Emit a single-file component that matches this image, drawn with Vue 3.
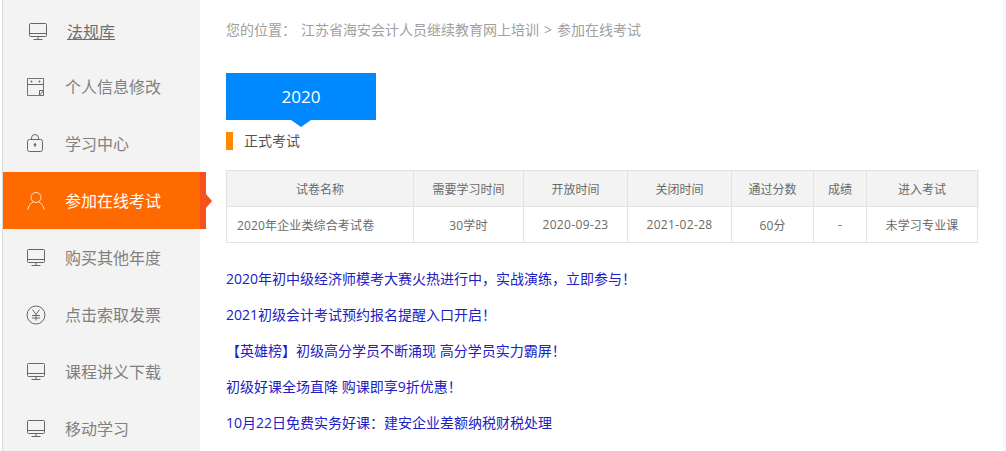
<script setup>
const menu = [
  { label: '法规库', icon: 'monitor', link: true },
  { label: '个人信息修改', icon: 'calendar' },
  { label: '学习中心', icon: 'bag' },
  { label: '参加在线考试', icon: 'user', active: true },
  { label: '购买其他年度', icon: 'monitor' },
  { label: '点击索取发票', icon: 'yen' },
  { label: '课程讲义下载', icon: 'monitor' },
  { label: '移动学习', icon: 'monitor' },
]
const heads = [
  ['试卷名称', 187], ['需要学习时间', 110], ['开放时间', 104], ['关闭时间', 104],
  ['通过分数', 82], ['成绩', 53], ['进入考试', 111],
]
const cells = ['2020年企业类综合考试卷', '30学时', '2020-09-23', '2021-02-28', '60分', '-', '未学习专业课']
const links = [
  '2020年初中级经济师模考大赛火热进行中，实战演练，立即参与！',
  '2021初级会计考试预约报名提醒入口开启！',
  '【英雄榜】初级高分学员不断涌现 高分学员实力霸屏！',
  '初级好课全场直降 购课即享9折优惠！',
  '10月22日免费实务好课：建安企业差额纳税财税处理',
]
</script>

<template>
  <div class="page">
    <aside class="side">
      <div
        v-for="m in menu"
        :key="m.label"
        class="item"
        :class="{ active: m.active, first: m.link }"
      >
        <svg class="ico" width="20" height="20" viewBox="0 0 20 20" fill="none" stroke="currentColor" stroke-width="1">
          <template v-if="m.icon === 'monitor'">
            <rect x="1.5" y="1.5" width="17" height="13" rx="1" />
            <path d="M1.5 11.5h17M10 14.5v3M5.5 17.5h9" />
          </template>
          <template v-else-if="m.icon === 'calendar'">
            <path d="M17.5 13.5v-12h-16v17h12" stroke-width=".9" />
            <path d="M1.5 7.5h16" />
            <circle cx="5.5" cy="4.5" r=".9" fill="currentColor" stroke="none" />
            <circle cx="13.5" cy="4.5" r=".9" fill="currentColor" stroke="none" />
            <path d="M13.5 13.5h4v5h-4zM14.5 17.5l2-3" />
          </template>
          <template v-else-if="m.icon === 'bag'">
            <rect x="1.5" y="5.5" width="15" height="12" rx="2" />
            <path d="M5.5 5.5v-1.5a3.5 3.5 0 0 1 7 0v1.5" />
            <circle cx="9" cy="10.5" r="1.3" fill="currentColor" stroke="none" />
            <path d="M9 11v2" />
          </template>
          <template v-else-if="m.icon === 'user'">
            <circle cx="10" cy="6.5" r="5" />
            <path d="M2 18.5c.6-4 3-6.5 5-7.5M18 18.5c-.6-4-3-6.5-5-7.5" />
          </template>
          <template v-else>
            <circle cx="10" cy="10" r="9" />
            <path d="M6.5 4.5L10 9.5l3.5-5M6 10.5h8M6 13h8M10 9.5v6" />
          </template>
        </svg>
        <span class="label">{{ m.label }}</span>
        <i v-if="m.active" class="tip"></i>
      </div>
    </aside>

    <main class="main">
      <div class="crumb">
        <span class="where">您的位置：</span>
        <span>江苏省海安会计人员继续教育网上培训</span>
        <span class="gt">&gt;</span>
        <span>参加在线考试</span>
      </div>

      <div class="year">2020</div>
      <div class="sub">正式考试</div>

      <div class="table">
        <div class="row head">
          <div v-for="h in heads" :key="h[0]" class="cell" :style="{ width: h[1] + 'px' }">{{ h[0] }}</div>
        </div>
        <div class="row body">
          <div
            v-for="(c, i) in cells"
            :key="c"
            class="cell"
            :class="{ left: i === 0, date: i === 2 || i === 3 }"
            :style="{ width: heads[i][1] + 'px' }"
          >{{ c }}</div>
        </div>
      </div>

      <div class="links">
        <a v-for="l in links" :key="l" class="lnk">{{ l }}</a>
      </div>
    </main>
    <div class="edge"></div>
  </div>
</template>

<style scoped>
.page {
  display: flex;
  width: 1006px;
  height: 451px;
  overflow: hidden;
  background: #fff;
  font-family: "Open Sans", "Noto Sans CJK SC", "Liberation Sans", sans-serif;
  box-sizing: border-box;
  padding-left: 2px;
}
.side {
  width: 198px;
  flex: none;
  background: #f3f3f3;
  border-left: 1px solid #d9d9d9;
  box-sizing: border-box;
  height: 451px;
}
.item {
  position: relative;
  display: flex;
  align-items: center;
  height: 57px;
  padding-left: 23px;
  color: #808080;
  font-size: 16px;
}
.item.first {
  height: 58px;
  padding-top: 5px;
  box-sizing: border-box;
  color: #6e6e6e;
}
.item.first .ico {
  margin-left: 2px;
  margin-right: 17px;
}
.item.first .label {
  text-decoration: underline;
  margin-left: 2px;
}
.label {
  margin-top: -2px;
}
.ico {
  flex: none;
  margin-right: 19px;
  color: #666;
}
.item.active {
  width: 203px;
  background: #ff6a00;
  color: #fff;
  box-sizing: border-box;
  border-right: 6px solid #f4511e;
}
.item.active .ico {
  color: #ffe6c8;
}
.tip {
  position: absolute;
  left: 203px;
  top: 50%;
  margin-top: -7px;
  width: 0;
  height: 0;
  border-top: 7px solid transparent;
  border-bottom: 7px solid transparent;
  border-left: 6px solid #f4511e;
}
.main {
  flex: 1;
  padding-left: 26px;
  min-width: 0;
}
.edge {
  flex: none;
  width: 3px;
  background: #f8f8f8;
}
.crumb {
  display: flex;
  height: 20px;
  margin-top: 19px;
  align-items: center;
  font-size: 14px;
  color: #a0a0a0;
}
.where {
  margin-right: 5px;
}
.gt {
  margin: 0 5px;
}
.year {
  position: relative;
  width: 150px;
  height: 47px;
  margin-top: 34px;
  background: #0089ff;
  color: #fff;
  font-size: 17px;
  line-height: 47px;
  text-align: center;
}
.year::after {
  content: "";
  position: absolute;
  left: 65px;
  top: 47px;
  border-left: 10px solid transparent;
  border-right: 10px solid transparent;
  border-top: 7px solid #0089ff;
}
.sub {
  margin-top: 12px;
  height: 18px;
  line-height: 17px;
  border-left: 7px solid #ff8a00;
  padding-left: 11px;
  font-size: 14px;
  color: #555;
}
.table {
  width: 752px;
  margin-top: 20px;
  border-top: 1px solid #e3e3e3;
  border-left: 1px solid #e3e3e3;
  font-size: 12px;
  color: #6a6a6a;
}
.row {
  display: flex;
}
.head {
  background: #f3f3f3;
  height: 36px;
}
.body {
  height: 36px;
  letter-spacing: .14px;
}
.cell {
  display: flex;
  align-items: center;
  justify-content: center;
  box-sizing: border-box;
  flex: none;
  border-right: 1px solid #e3e3e3;
  border-bottom: 1px solid #e3e3e3;
  white-space: nowrap;
}
.cell.left {
  justify-content: flex-start;
  padding-left: 10px;
}
.cell.date {
  letter-spacing: .35px;
}
.links {
  display: flex;
  flex-direction: column;
  margin-top: 18px;
}
.lnk {
  height: 36px;
  line-height: 36px;
  font-size: 14px;
  color: #2020c4;
  white-space: nowrap;
}
</style>

<style>
html, body {
  margin: 0;
  padding: 0;
  overflow: hidden;
}
</style>
